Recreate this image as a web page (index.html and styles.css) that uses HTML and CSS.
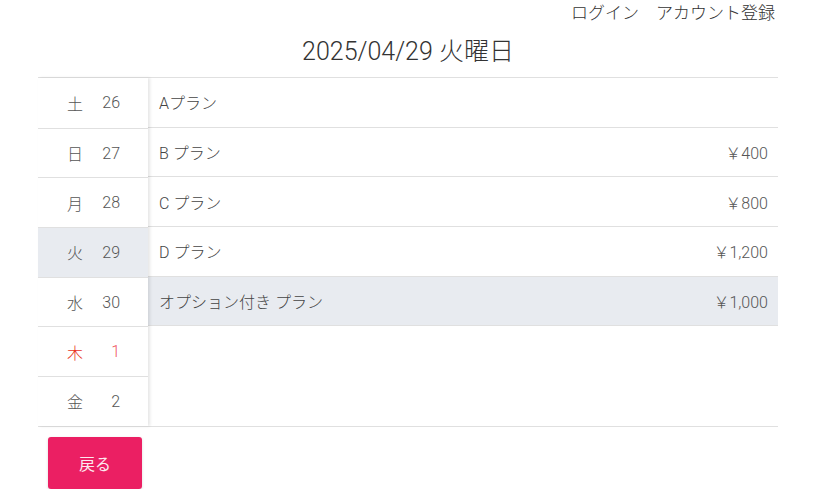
FILE: index.html
```html
<!DOCTYPE html>
<html lang="ja">
<head>
<meta charset="utf-8">
<link rel="stylesheet" href="styles.css">
</head>
<body>
<header class="top">
  <a class="link">ログイン</a>
  <a class="link">アカウント登録</a>
</header>
<main class="wrap">
  <h1 class="title">2025/04/29 火曜日</h1>
  <div class="table">
    <ul class="days">
      <li class="day"><span class="dn">土</span><span class="dd">26</span></li>
      <li class="day"><span class="dn">日</span><span class="dd">27</span></li>
      <li class="day"><span class="dn">月</span><span class="dd">28</span></li>
      <li class="day active"><span class="dn">火</span><span class="dd">29</span></li>
      <li class="day"><span class="dn">水</span><span class="dd">30</span></li>
      <li class="day holiday"><span class="dn">木</span><span class="dd">1</span></li>
      <li class="day"><span class="dn">金</span><span class="dd">2</span></li>
    </ul>
    <ul class="plans">
      <li class="plan"><span>Aプラン</span><span></span></li>
      <li class="plan"><span>B プラン</span><span class="price">￥400</span></li>
      <li class="plan"><span>C プラン</span><span class="price">￥800</span></li>
      <li class="plan"><span>D プラン</span><span class="price">￥1,200</span></li>
      <li class="plan selected"><span>オプション付き プラン</span><span class="price">￥1,000</span></li>
    </ul>
  </div>
  <button class="back">戻る</button>
</main>
</body>
</html>
```
FILE: styles.css
```css
* { box-sizing: border-box; }
body {
  margin: 0;
  background: #fff;
  font-family: Roboto, "Noto Sans CJK JP", sans-serif;
  font-weight: 300;
  color: #444;
}
.top {
  display: flex;
  justify-content: flex-end;
  gap: 17px;
  height: 28px;
  padding: 2px 45px 0 0;
  font-size: 17px;
  line-height: 22px;
  color: #333;
}
.link { cursor: pointer; }
.wrap {
  margin: 0 42px 0 38px;
}
.title {
  margin: 0;
  height: 49px;
  text-align: center;
  font-size: 25px;
  font-weight: 300;
  line-height: 48px;
  color: #333;
}
.table {
  display: flex;
  border-top: 1px solid #e0e0e0;
  border-bottom: 1px solid #e0e0e0;
}
.days, .plans {
  list-style: none;
  margin: 0;
  padding: 0;
}
.days {
  width: 110px;
  flex: none;
  box-shadow: 2px 0 3px rgba(0,0,0,0.10);
  position: relative;
  z-index: 1;
}
.day {
  display: flex;
  align-items: center;
  height: 49.7px;
  border-top: 1px solid #e0e0e0;
  font-size: 16px;
  color: #555;
}
.day:first-child { border-top: none; }
.dn { width: 46px; text-align: right; padding-right: 1px; }
.dd { width: 36px; text-align: right; }
.day.active { background: #e8ebf0; }
.day.holiday .dn { color: #e8331c; }
.day.holiday .dd { color: #ef5a64; }
.plans { flex: 1; }
.plan {
  display: flex;
  justify-content: space-between;
  align-items: center;
  height: 49.7px;
  padding: 0 10px 0 11px;
  border-bottom: 1px solid #e0e0e0;
  font-size: 16px;
  color: #444;
}
.plan.selected { background: #e8ebf0; }
.price { color: #555; }
.back {
  margin: 10px 0 0 10px;
  width: 94px;
  height: 52px;
  border: none;
  border-radius: 3px;
  background: #eb1f63;
  color: #fde8ef;
  font-family: Roboto, "Noto Sans CJK JP", sans-serif;
  font-weight: 400;
  font-size: 16px;
  box-shadow: 0 1px 3px rgba(0,0,0,0.15);
}
```
